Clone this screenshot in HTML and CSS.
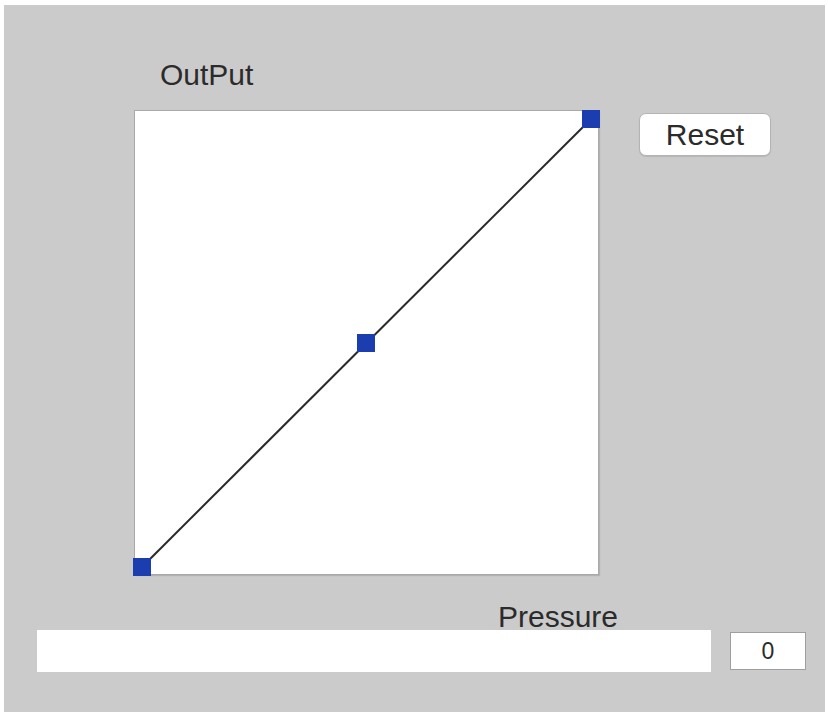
FILE: index.html
```html
<!DOCTYPE html>
<html lang="en">
<head>
    <meta charset="UTF-8">
    <meta name="viewport" content="width=device-width, initial-scale=1.0">
    <title>Pressure Curve</title>
    <link rel="stylesheet" href="styles.css">
</head>
<body>
    <div class="panel">
        <div class="chart-area">
            <div class="chart-title">OutPut</div>
            <div class="chart-row">
                <div class="graph">
                    <svg class="curve" viewBox="0 0 465 465" width="465" height="465">
                        <line x1="8" y1="457" x2="457" y2="9" stroke="#2a2a2a" stroke-width="2"/>
                        <rect x="-1" y="448" width="18" height="18" fill="#1b3db0"/>
                        <rect x="223" y="224" width="18" height="18" fill="#1b3db0"/>
                        <rect x="448" y="0" width="18" height="18" fill="#1b3db0"/>
                    </svg>
                </div>
                <button class="reset-btn">Reset</button>
            </div>
        </div>

        <div class="pressure">
            <div class="pressure-title">Pressure</div>
            <div class="pressure-row">
                <div class="pressure-bar"></div>
                <div class="pressure-value">0</div>
            </div>
        </div>
    </div>
</body>
</html>
```

FILE: styles.css
```css
body {
    margin: 0;
    background: #ffffff;
    font-family: "Liberation Sans", Arial, sans-serif;
    color: #2b2b2b;
}
.panel {
    margin: 5px 3px 3px 4px;
    height: 707px;
    box-sizing: border-box;
    background: #cbcbcb;
    overflow: hidden;
}
.chart-area {
    padding-left: 130px;
    padding-top: 53px;
}
.chart-title {
    margin-left: 26px;
    font-size: 30px;
    line-height: 34px;
    margin-bottom: 18px;
}
.chart-row {
    display: flex;
    align-items: flex-start;
    gap: 40px;
}
.graph {
    width: 465px;
    height: 465px;
    box-sizing: border-box;
    background: #ffffff;
    border: 1px solid #a9a9a9;
    box-shadow: 1px 1px 1px rgba(0, 0, 0, 0.12);
    position: relative;
}
.curve {
    position: absolute;
    left: -1px;
    top: -1px;
    overflow: visible;
}
.reset-btn {
    margin-top: 3px;
    width: 132px;
    height: 43px;
    background: #ffffff;
    border: 1px solid #b3b3b3;
    border-radius: 7px;
    font-family: "Liberation Sans", Arial, sans-serif;
    font-size: 30px;
    color: #2b2b2b;
    padding: 0;
    box-shadow: 0 1px 1px rgba(0, 0, 0, 0.1);
}
.pressure {
    margin-top: 27px;
}
.pressure-title {
    padding-left: 494px;
    font-size: 30px;
    line-height: 30px;
    margin-bottom: -2px;
}
.pressure-row {
    display: flex;
    align-items: flex-start;
    padding-left: 33px;
    gap: 19px;
}
.pressure-bar {
    width: 674px;
    height: 42px;
    background: #ffffff;
}
.pressure-value {
    margin-top: 2px;
    width: 76px;
    height: 38px;
    box-sizing: border-box;
    background: #ffffff;
    border: 1px solid #9f9f9f;
    font-size: 23px;
    line-height: 36px;
    text-align: center;
}
```
